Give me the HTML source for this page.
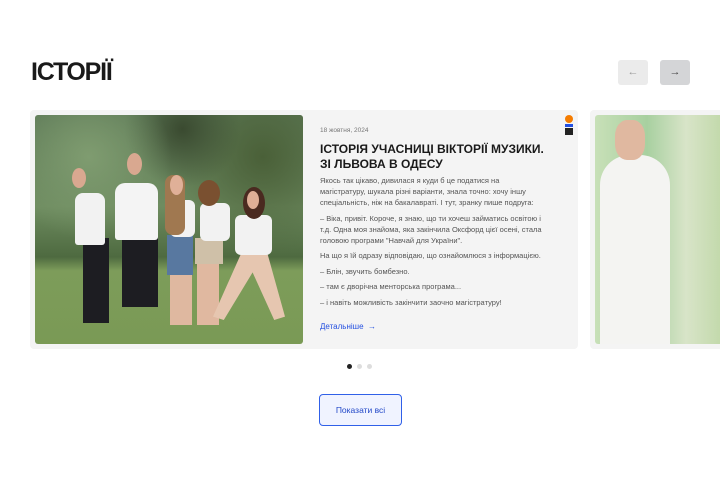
<!DOCTYPE html>
<html><head><meta charset="utf-8"><style>
*{margin:0;padding:0;box-sizing:border-box}
body{width:720px;height:486px;background:#fff;font-family:"Liberation Sans",sans-serif;position:relative;overflow:hidden;color:#222}
h1{position:absolute;left:31px;top:58px;font-size:25px;font-weight:700;letter-spacing:-1.2px;color:#1a1a1a}
.btn{position:absolute;top:60px;width:30px;height:25px;border-radius:3px;text-align:center;line-height:24px;font-size:11px;color:#555}
.card{position:absolute;left:30px;top:110px;width:548px;height:239px;background:#f4f4f4;border-radius:4px}
.photo{position:absolute;left:35px;top:115px;width:268px;height:229px;border-radius:3px;background:linear-gradient(180deg,#5e7a58 0%,#6e8c60 40%,#4e6a40 62%,#7d9c5a 68%,#7a9a55 100%);overflow:hidden}
.photo div{position:absolute}
.txt{position:absolute;left:320px;top:125px;width:224px;font-size:7.5px;line-height:11px;color:#555}
.date{font-size:6.5px;color:#777;margin-bottom:6px}
.title{font-size:12px;font-weight:700;color:#1a1a1a;line-height:14.5px;margin-bottom:4px;width:260px}
.txt p{margin-bottom:4.5px}
.more{position:absolute;left:320px;top:322px;font-size:8px;color:#2450e0}
.card2{position:absolute;left:590px;top:110px;width:140px;height:239px;background:#f4f4f4;border-radius:4px}
.photo2{position:absolute;left:595px;top:115px;width:130px;height:229px;border-radius:3px;background:linear-gradient(90deg,#c8e0b8,#a8d0a0 40%,#d8e4c8 70%,#c0d8a8);overflow:hidden}
.dot{position:absolute;top:364px;width:5px;height:5px;border-radius:50%;background:#ddd}
.show{position:absolute;left:319px;top:394px;width:83px;height:32px;border:1.5px solid #3060e8;border-radius:4px;background:#f0f3ff;color:#2248c8;font-size:8.5px;text-align:center;line-height:30px}
</style></head><body>
<h1>ІСТОРІЇ</h1>
<div class="btn" style="left:618px;background:#ebebeb;color:#999">←</div>
<div class="btn" style="left:660px;background:#d4d5d7;color:#444">→</div>
<div class="card"></div>
<div class="photo">
 <div style="left:0;top:0;width:268px;height:140px;background:radial-gradient(circle at 20% 30%,#7f9c70,transparent 35%),radial-gradient(circle at 55% 10%,#3a4a30,transparent 30%),radial-gradient(circle at 85% 30%,#4a6038,transparent 40%)"></div>
 <div style="left:48px;top:123px;width:26px;height:85px;background:#1d1d22"></div>
 <div style="left:40px;top:78px;width:30px;height:52px;background:#f2f2f2;border-radius:8px 8px 3px 3px"></div>
 <div style="left:37px;top:53px;width:14px;height:20px;background:#d9a890;border-radius:50%"></div>
 <div style="left:87px;top:120px;width:36px;height:72px;background:#1d1d22"></div>
 <div style="left:80px;top:68px;width:43px;height:57px;background:#f4f4f4;border-radius:10px 10px 3px 3px"></div>
 <div style="left:92px;top:38px;width:15px;height:22px;background:#d9a890;border-radius:50%"></div>
 <div style="left:132px;top:120px;width:26px;height:40px;background:#5878a0"></div>
 <div style="left:135px;top:160px;width:22px;height:50px;background:#dfb8a0"></div>
 <div style="left:135px;top:85px;width:25px;height:37px;background:#f2f2f2;border-radius:6px"></div>
 <div style="left:130px;top:60px;width:20px;height:60px;background:#a07850;border-radius:8px"></div>
 <div style="left:135px;top:60px;width:13px;height:20px;background:#e0b098;border-radius:50%"></div>
 <div style="left:162px;top:148px;width:22px;height:62px;background:#e0b8a0"></div>
 <div style="left:160px;top:123px;width:28px;height:26px;background:#cfc0a8"></div>
 <div style="left:165px;top:88px;width:30px;height:38px;background:#f2f2f2;border-radius:6px"></div>
 <div style="left:163px;top:65px;width:22px;height:26px;background:#7a5030;border-radius:50%"></div>
 <div style="left:178px;top:137px;width:72px;height:68px;background:#e6c6b0;clip-path:polygon(40% 0,75% 0,100% 95%,85% 100%,55% 30%,15% 100%,0 95%)"></div>
 <div style="left:200px;top:100px;width:37px;height:40px;background:#f2f2f2;border-radius:6px"></div>
 <div style="left:208px;top:72px;width:22px;height:32px;background:#4a2a20;border-radius:50%"></div>
 <div style="left:212px;top:76px;width:12px;height:18px;background:#dfae96;border-radius:50%"></div>
</div>
<div class="txt">
<div class="date">18 жовтня, 2024</div>
<div class="title">ІСТОРІЯ УЧАСНИЦІ ВІКТОРІЇ МУЗИКИ.<br>ЗІ ЛЬВОВА В ОДЕСУ</div>
<p>Якось так цікаво, дивилася я куди б це податися на магістратуру, шукала різні варіанти, знала точно: хочу іншу спеціальність, ніж на бакалавраті. І тут, зранку пише подруга:</p>
<p>– Віка, привіт. Короче, я знаю, що ти хочеш займатись освітою і т.д. Одна моя знайома, яка закінчила Оксфорд цієї осені, стала головою програми "Навчай для України".</p>
<p>На що я їй одразу відповідаю, що ознайомлюся з інформацією.</p>
<p>– Блін, звучить бомбезно.</p>
<p>– там є дворічна менторська програма...</p>
<p>– і навіть можливість закінчити заочно магістратуру!</p>
</div>
<div class="more">Детальніше &nbsp;→</div>
<div style="position:absolute;left:565px;top:115px;width:8px;height:8px;border-radius:50%;background:#f57c00"></div>
<div style="position:absolute;left:565px;top:124px;width:8px;height:3px;background:#2450e0"></div>
<div style="position:absolute;left:565px;top:128px;width:8px;height:7px;background:#222"></div>
<div class="card2"></div>
<div class="photo2"><div style="position:absolute;left:5px;top:40px;width:70px;height:189px;background:#f4f4f2;border-radius:30px 30px 0 0"></div><div style="position:absolute;left:20px;top:5px;width:30px;height:40px;background:#e0b8a0;border-radius:40%"></div></div>
<div class="dot" style="left:347px;background:#222"></div>
<div class="dot" style="left:357px"></div>
<div class="dot" style="left:367px"></div>
<div class="show">Показати всі</div>
</body></html>
